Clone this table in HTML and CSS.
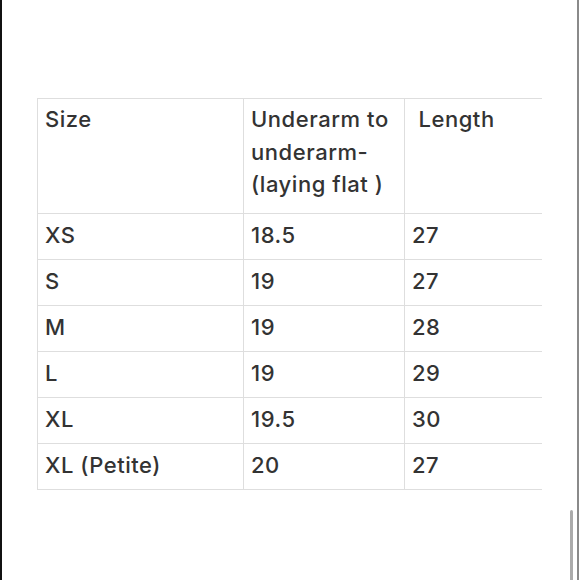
FILE: index.html
```html
<!DOCTYPE html>
<html>
<head>
<meta charset="utf-8">
<link rel="stylesheet" href="styles.css">
</head>
<body>
<div class="page">
  <table class="sizes">
    <colgroup>
      <col class="c1"><col class="c2"><col class="c3">
    </colgroup>
    <thead>
      <tr><th>Size</th><th>Underarm to underarm- (laying flat )</th><th>&nbsp;Length</th></tr>
    </thead>
    <tbody>
      <tr><td>XS</td><td>18.5</td><td>27</td></tr>
      <tr><td>S</td><td>19</td><td>27</td></tr>
      <tr><td>M</td><td>19</td><td>28</td></tr>
      <tr><td>L</td><td>19</td><td>29</td></tr>
      <tr><td>XL</td><td>19.5</td><td>30</td></tr>
      <tr><td>XL (Petite)</td><td>20</td><td>27</td></tr>
    </tbody>
  </table>
  <div class="scrollbar"></div>
</div>
</body>
</html>
```
FILE: styles.css
```css
html, body {
  margin: 0;
  padding: 0;
  background: #fff;
}
.page {
  position: relative;
  box-sizing: border-box;
  width: 579px;
  height: 580px;
  border-left: 2px solid #111;
  border-right: 2px solid #8a8a8a;
  padding: 98px 0 0 35px;
  font-family: Inter, "Noto Sans", sans-serif;
  color: #333;
  overflow: hidden;
}
.sizes {
  border-collapse: collapse;
  table-layout: fixed;
  width: 504px;
  font-size: 22px;
  font-weight: 500;
  letter-spacing: 0.55px;
  line-height: 32.5px;
}
.c1 { width: 206px; }
.c2 { width: 161px; }
.c3 { width: 137px; }
.sizes th, .sizes td {
  border: 1px solid #dedede;
  text-align: left;
  vertical-align: top;
  font-weight: 500;
  padding: 4.5px 6px 8px 7px;
}
.sizes th {
  padding: 4px 6px 12.5px 7px;
}
.sizes th:last-child, .sizes td:last-child {
  border-right: none;
}
.scrollbar {
  position: absolute;
  right: 4px;
  top: 510px;
  width: 3px;
  height: 70px;
  background: #ababab;
  border-radius: 2px 2px 0 0;
}
```
